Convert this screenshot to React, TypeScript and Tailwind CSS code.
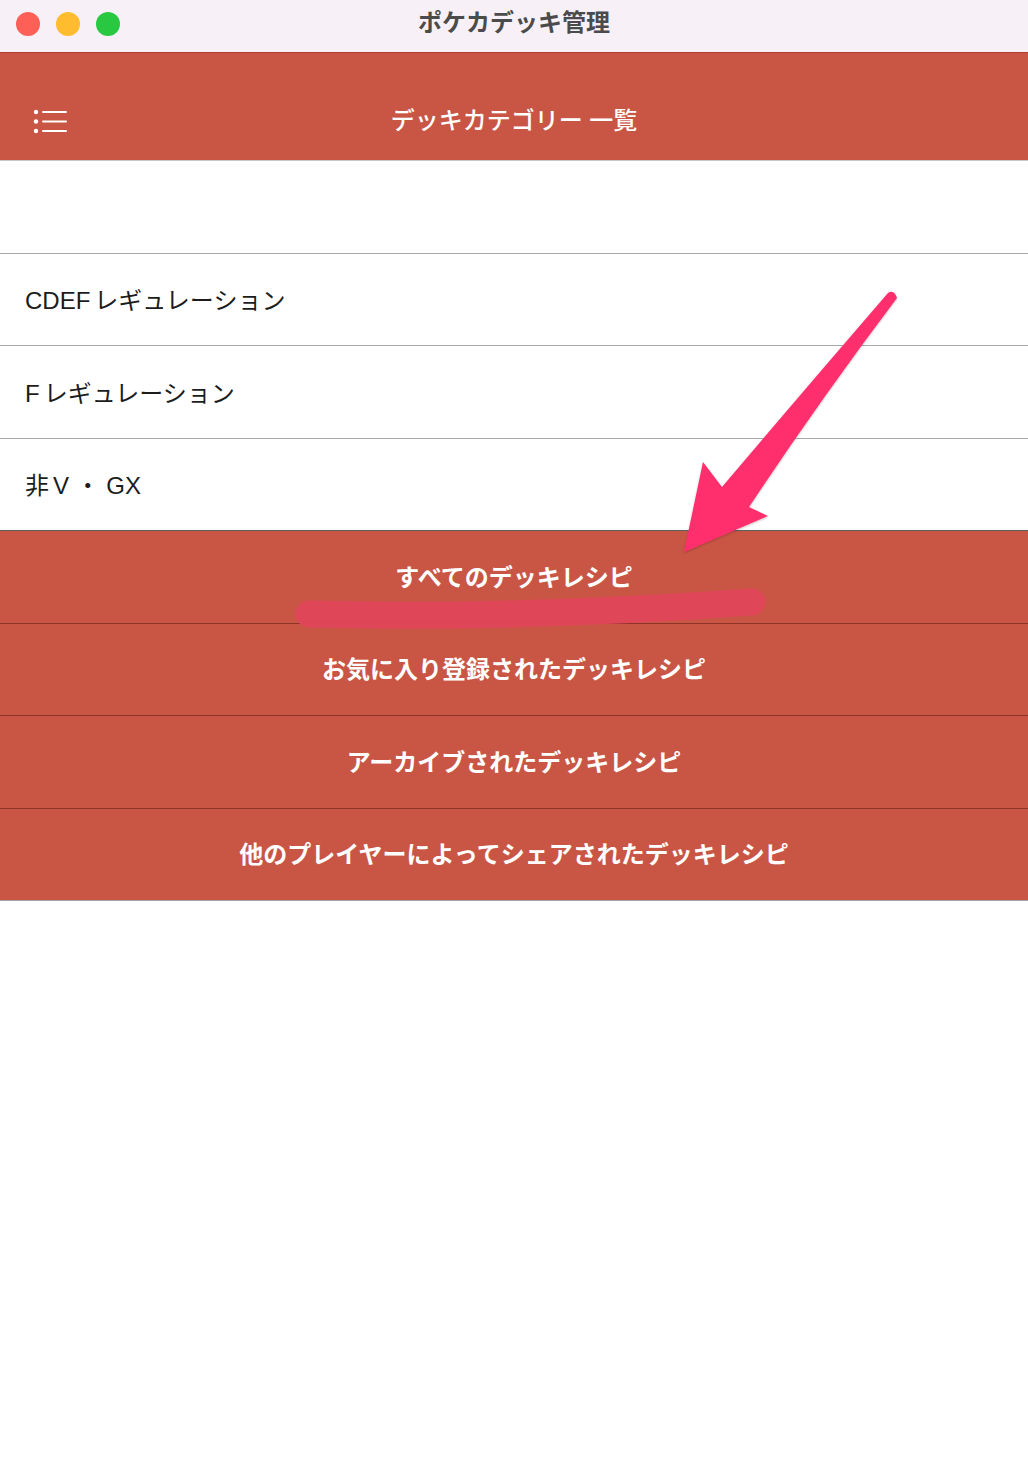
const font = { fontFamily: '"Liberation Sans", "Noto Sans CJK JP", sans-serif' };

// [latin prefix, rest]
const categories: [string, string][] = [
  ["CDEF", "レギュレーション"],
  ["F", "レギュレーション"],
  ["非", "V ・ GX"],
];

const recipeButtons = [
  "すべてのデッキレシピ",
  "お気に入り登録されたデッキレシピ",
  "アーカイブされたデッキレシピ",
  "他のプレイヤーによってシェアされたデッキレシピ",
];

function MenuIcon() {
  return (
    <svg width="36" height="26" viewBox="0 0 36 26" fill="none">
      <circle cx="3" cy="3" r="2.2" fill="white" />
      <circle cx="3" cy="12.5" r="2.2" fill="white" />
      <circle cx="3" cy="22" r="2.2" fill="white" />
      <rect x="9" y="2" width="25" height="2" rx="1" fill="white" />
      <rect x="9" y="11.5" width="25" height="2" rx="1" fill="white" />
      <rect x="9" y="21" width="25" height="2" rx="1" fill="white" />
    </svg>
  );
}

function Annotation() {
  return (
    <svg className="pointer-events-none absolute left-0 top-0" width="1028" height="1464" viewBox="0 0 1028 1464">
      <defs>
        <filter id="shadow" x="-10%" y="-10%" width="120%" height="120%">
          <feDropShadow dx="0" dy="1" stdDeviation="1.2" floodColor="#000" floodOpacity="0.25" />
        </filter>
      </defs>
      {/* highlight stroke under the first button */}
      <path
        d="M 309 614 Q 520 619 752 602"
        stroke="#e0465a"
        strokeWidth="27"
        strokeLinecap="round"
        fill="none"
        opacity="0.95"
      />
      {/* arrow */}
      <path
        filter="url(#shadow)"
        fill="#ff2f6d"
        d="M 888 293 Q 894 289 897 298 Q 820 400 749 507 L 768 516 L 684 552 L 703 462 L 722 487 Q 800 395 888 293 Z"
      />
    </svg>
  );
}

export default function App() {
  return (
    <div className="relative h-[1464px] w-[1028px] overflow-hidden bg-white" style={font}>
      {/* window title bar */}
      <div className="relative flex h-[53px] items-center justify-center border-b border-[#b23d30] bg-[#f7f1f7] pb-[6px]">
        <div className="absolute left-[16px] top-[12px] flex gap-[16px]">
          <span className="h-[24px] w-[24px] rounded-full bg-[#fe5f57]" />
          <span className="h-[24px] w-[24px] rounded-full bg-[#febc2e]" />
          <span className="h-[24px] w-[24px] rounded-full bg-[#28c840]" />
        </div>
        <span className="text-[24px] font-bold text-[#4b4b4b]">ポケカデッキ管理</span>
      </div>

      {/* navigation header */}
      <div className="h-[108px] border-b border-[#c8c8c8] bg-[#c95645] pt-[46px]">
        <div className="relative flex h-[44px] items-center justify-center">
          <div className="absolute left-[33px] top-[10px]">
            <MenuIcon />
          </div>
          <span className="text-[24px] font-medium text-white">デッキカテゴリー 一覧</span>
        </div>
      </div>

      {/* categories */}
      <div className="h-[92.5px] border-b border-[#a9a9a9]" />
      {categories.map(([prefix, rest], i) => (
        <div
          key={prefix + rest}
          className={`flex h-[92.5px] items-center border-b px-[25px] pt-[4px] text-[24px] text-[#1c1c1c] ${
            i === categories.length - 1 ? "border-[#5e5e5e]" : "border-[#a9a9a9]"
          }`}
        >
          <span className="mr-[4px]">{prefix}</span>
          <span>{rest}</span>
        </div>
      ))}

      {/* recipe buttons */}
      {recipeButtons.map((b, i) => (
        <div
          key={b}
          className={`flex h-[92.5px] items-center justify-center border-b bg-[#c95645] pt-[2px] text-[24px] font-bold text-white ${
            i === recipeButtons.length - 1 ? "border-[#a5a5a5]" : "border-[#8e3328]"
          }`}
        >
          {b}
        </div>
      ))}

      <Annotation />
    </div>
  );
}
